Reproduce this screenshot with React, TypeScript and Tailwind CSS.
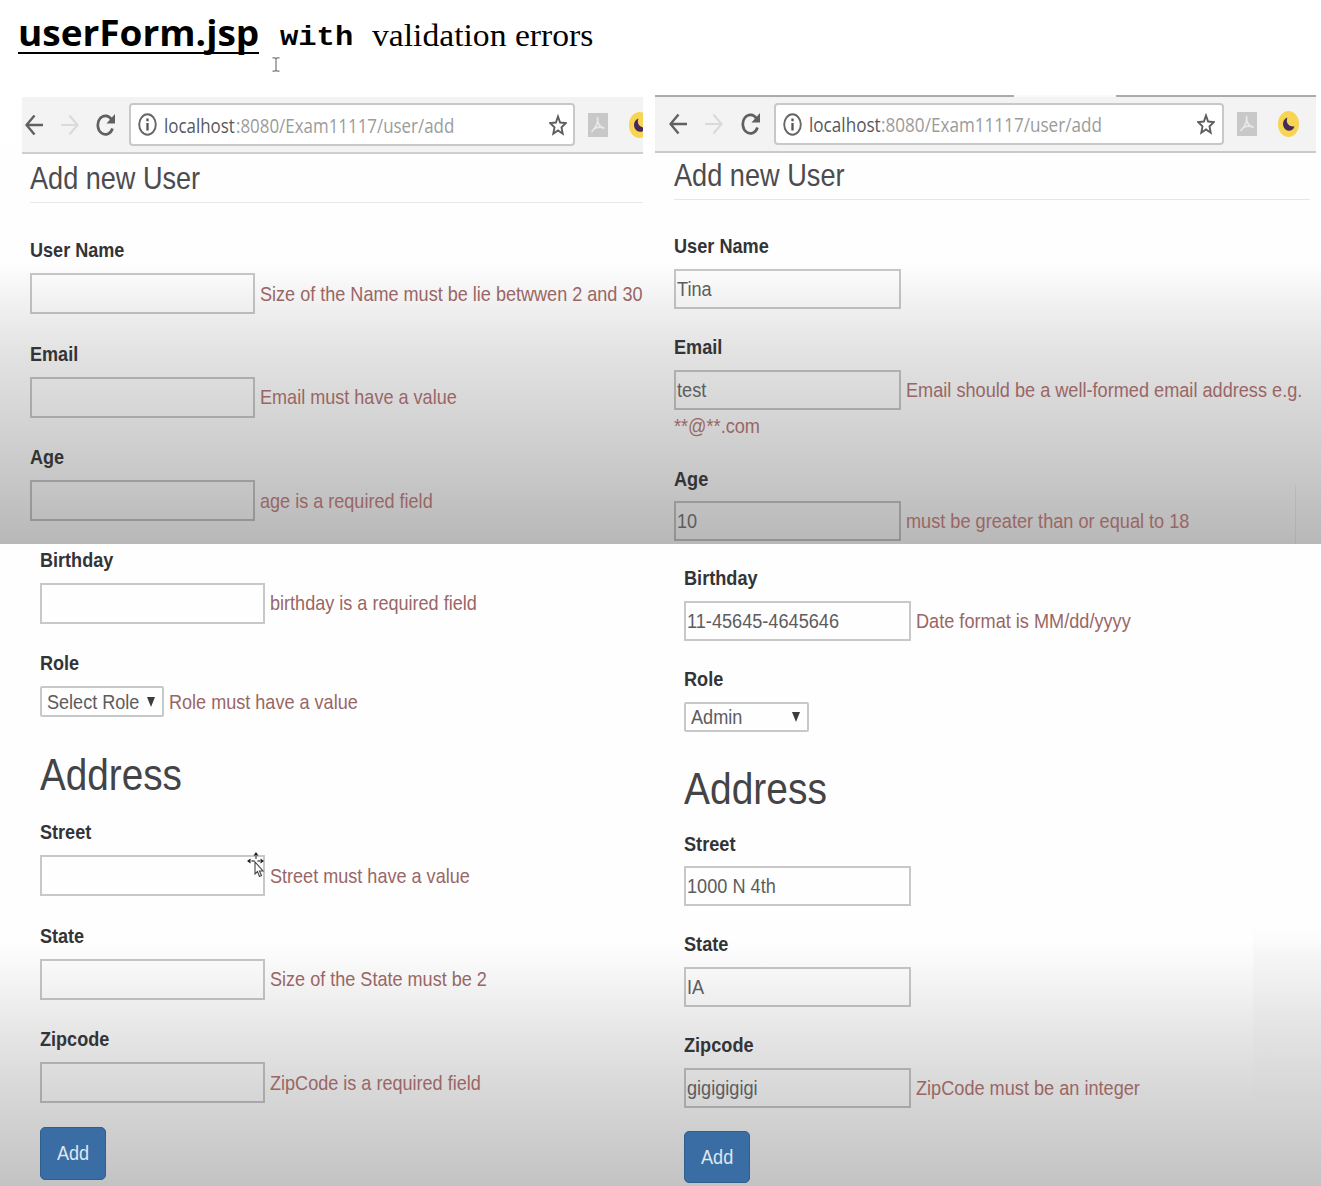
import type { ReactNode } from "react";

// Both browser captures are squeezed horizontally; each has its own metrics.
type Skin = {
  text: string;
  label: string;
  box: string;
  field: string;
  select: string;
  heading: string;
  address: string;
  button: string;
};

const LEFT: Skin = {
  text: "text-[21px] leading-6 scale-x-[0.86]",
  label: "mb-[11px]",
  box: "h-[41px] w-[225px]",
  field: "mb-[27.5px]",
  select: "h-[31px] w-[124px]",
  heading: "text-[31.5px] leading-9 scale-x-[0.86]",
  address: "text-[45px] leading-[50px] scale-x-[0.86]",
  button: "h-[53px] w-[66px] pl-4",
};

const RIGHT: Skin = {
  text: "text-[20.5px] leading-6 scale-x-[0.885]",
  label: "mb-[10.6px]",
  box: "h-[40px] w-[227px]",
  field: "mb-[26.3px]",
  select: "h-[30px] w-[125px]",
  heading: "text-[30.7px] leading-9 scale-x-[0.885]",
  address: "text-[44px] leading-[50px] scale-x-[0.885]",
  button: "h-[52px] w-[66px] pl-4",
};

function Txt({ c, children }: { c: string; children: ReactNode }) {
  return <span className={"block origin-left whitespace-nowrap " + c}>{children}</span>;
}

function Field({ s, label, value, error, more, last }: {
  s: Skin; label: string; value?: string; error?: string; more?: string; last?: boolean;
}) {
  return (
    <div className={last ? "" : s.field}>
      <Txt c={s.text + " font-bold text-[#333437] " + s.label}>{label}</Txt>
      <div className="flex items-center">
        <div className={"flex shrink-0 items-center border-2 border-black/21 pl-px " + s.box}>
          {value && <Txt c={s.text + " text-[#5c5c5e]"}>{value}</Txt>}
        </div>
        {error && <div className="ml-[4.5px] w-0"><Txt c={s.text + " text-[#996665]"}>{error}</Txt></div>}
      </div>
      {more && <div className="-mb-[1.4px] flex h-8 items-center"><Txt c={s.text + " text-[#996665]"}>{more}</Txt></div>}
    </div>
  );
}

function Select({ s, value, error }: { s: Skin; value: string; error?: string }) {
  return (
    <div>
      <Txt c={s.text + " font-bold text-[#333437] " + s.label}>Role</Txt>
      <div className="flex items-center">
        <div className={"flex shrink-0 items-center rounded-[2px] border-2 border-black/21 pr-[7px] pl-[5px] " + s.select}>
          <div className="min-w-0 flex-1"><Txt c={s.text + " text-[#5c5c5e]"}>{value}</Txt></div>
          <svg className="h-[10px] w-2" viewBox="0 0 8 10"><path d="M0 0h8L4 10z" fill="#3c3c3c" /></svg>
        </div>
        {error && <div className="ml-[4.5px] w-0"><Txt c={s.text + " text-[#996665]"}>{error}</Txt></div>}
      </div>
    </div>
  );
}

function AddButton({ s }: { s: Skin }) {
  return (
    <button className={"flex items-center rounded-[5px] border border-[#305f8e] bg-[#3a6da3] " + s.button}>
      <Txt c={s.text + " text-[#dfe6ee]"}>Add</Txt>
    </button>
  );
}

function Back() {
  return <svg className="h-[22px] w-[18px] shrink-0" viewBox="0 0 18 22" fill="none" stroke="#606060" strokeWidth="2.4"><path d="M18 11H2M9.5 1.5L1.5 11l8 9.5" /></svg>;
}
function Forward() {
  return <svg className="h-[22px] w-[18px] shrink-0" viewBox="0 0 18 22" fill="none" stroke="#dadada" strokeWidth="2.2"><path d="M0 11h16M8.5 1.5L16.5 11l-8 9.5" /></svg>;
}
function Reload() {
  return (
    <svg className="h-[22px] w-[19px] shrink-0" viewBox="0 0 19 22">
      <path d="M16.5 14.5A7.6 9.3 0 1 1 15.5 5.5" fill="none" stroke="#606060" strokeWidth="2.7" />
      <path d="M19 0v9.5h-8.5z" fill="#606060" />
    </svg>
  );
}
function Info() {
  return (
    <svg className="h-[23px] w-[19px] shrink-0" viewBox="0 0 19 23">
      <ellipse cx="9.5" cy="11.5" rx="8.3" ry="10.2" fill="none" stroke="#666" strokeWidth="1.9" />
      <path d="M9.5 5.5v2.7M9.5 10v7.5" stroke="#555" strokeWidth="2.3" />
    </svg>
  );
}
function Star() {
  return (
    <svg className="h-[22px] w-[18px] shrink-0" viewBox="0 0 18 22">
      <path d="M9 2.5l2.100 6 5.600.6-4.200 4.300 1.200 6.300L9 16.500l-4.700 3.200 1.200-6.300L1.300 9.100l5.600-.6z" fill="none" stroke="#5d5d5d" strokeWidth="1.9" />
    </svg>
  );
}
function Pdf() {
  return (
    <svg className="h-6 w-5 shrink-0" viewBox="0 0 20 24">
      <path d="M0 0h20v24H0z" fill="#c8c8c8" />
      <path d="M9.5 4c1 5-1 10-6 15M9.5 5c0 6 3 9.500 7 10.500M5.500 16c3-2 7-2.500 11-1" fill="none" stroke="#e8e8e8" strokeWidth="1.7" />
    </svg>
  );
}
function Moon() {
  return (
    <svg className="h-[26px] w-[21px] shrink-0" viewBox="0 0 21 26">
      <ellipse cx="10.5" cy="13" rx="10.5" ry="13" fill="#f7d553" />
      <path d="M9.5 6.5C7.500 11 10 16 16.500 15.500 15 20 10.500 21 7.500 18.500 3.500 15 4.500 8 9.500 6.500z" fill="#47295c" />
    </svg>
  );
}

function Url({ path }: { path: string }) {
  return (
    <div className="flex flex-1 font-['Open_Sans',sans-serif] text-[20.5px] leading-7">
      <div className="w-[72px]"><Txt c={"text-[#55585b] " + path}>localhost</Txt></div>
      <div className="w-0"><Txt c={"text-[#9b9b9b] " + path}>:8080/Exam11117/user/add</Txt></div>
    </div>
  );
}

export default function App() {
  return (
    <div className="h-[1186px] w-[1321px] overflow-hidden bg-white font-['Liberation_Sans',Arial,sans-serif]">
      <section className="h-[544px] overflow-hidden bg-[linear-gradient(to_bottom,#fff_0px,#fefefe_262px,#f3f3f3_296px,#e3e3e3_350px,#d2d2d2_430px,#b8b8b8_544px)]">
        <header className="relative flex h-[95px] items-start pl-[18px] text-black">
          <h1 className="mt-[13px] h-[41px] w-[241px] border-b-2 border-black">
            <Txt c="font-['Open_Sans',sans-serif] text-[36px] leading-10 font-bold scale-x-[1.027]">userForm.jsp</Txt>
          </h1>
          <div className="mt-[18px] ml-[21px] w-[92px]">
            <Txt c="font-['Liberation_Mono',monospace] text-[27px] leading-10 font-bold scale-x-[1.13]">with</Txt>
          </div>
          <div className="mt-4"><Txt c="font-['Liberation_Serif',serif] text-[31px] leading-10 scale-x-[1.085]">validation errors</Txt></div>
          <svg className="absolute top-[57px] left-[272px] h-[15px] w-2" viewBox="0 0 8 15" fill="none" stroke="#777" strokeWidth="1.2">
            <path d="M.5 .8h2.500L4 1.800 5 .8h2.500M4 1.500v12M.5 14.200h2.500l1-1 1 1h2.500" />
          </svg>
        </header>
        <div className="flex">
          <div className="w-[655px] shrink-0 pt-0.5 pl-[22px]">
            <div className="flex h-[57px] w-[621px] items-center overflow-hidden border-b-2 border-[#cfcfcf] bg-[#f3f3f3] pl-[3px]">
              <Back />
              <div className="ml-[18px] shrink-0"><Forward /></div>
              <div className="ml-[17px] shrink-0"><Reload /></div>
              <div className="ml-[14px] flex h-[43px] w-[446px] shrink-0 items-center rounded-[4px] border-2 border-[#c8c8c8] bg-white pr-[6px] pl-[7px]">
                <Info />
                <div className="ml-[7px] flex flex-1"><Url path="scale-x-[0.825]" /></div>
                <Star />
              </div>
              <div className="ml-[13px] shrink-0"><Pdf /></div>
              <div className="ml-[21px] shrink-0"><Moon /></div>
            </div>
            <div className="pl-2">
              <div className="mt-1.5 text-[#4c4c4f]"><Txt c={LEFT.heading}>Add new User</Txt></div>
              <div className="mt-1.5 mb-[35.4px] h-px w-[613px] bg-[#e8e8e8]" />
              <Field s={LEFT} label="User Name" error="Size of the Name must be lie betwwen 2 and 30" />
              <Field s={LEFT} label="Email" error="Email must have a value" />
              <Field s={LEFT} label="Age" error="age is a required field" />
            </div>
          </div>
          <div className="relative w-[666px] shrink-0">
            <div className="flex h-0.5 w-[661px] justify-between">
              <div className="w-[359px] bg-[#ababab]" />
              <div className="h-full flex-1 bg-[#fafafa]" />
              <div className="w-[200px] bg-[#ababab]" />
            </div>
            <div className="flex h-14 w-[661px] items-center border-b-2 border-[#cacaca] bg-[#f3f3f3] pl-[14px]">
              <Back />
              <div className="ml-[18px] shrink-0"><Forward /></div>
              <div className="ml-[18px] shrink-0"><Reload /></div>
              <div className="ml-[14px] flex h-[42px] w-[450px] shrink-0 items-center rounded-[4px] border-2 border-[#c8c8c8] bg-white pr-[7px] pl-[7px]">
                <Info />
                <div className="ml-[7px] flex flex-1"><Url path="scale-x-[0.835]" /></div>
                <Star />
              </div>
              <div className="ml-[13px] shrink-0"><Pdf /></div>
              <div className="ml-[21px] shrink-0"><Moon /></div>
            </div>
            <div className="pl-[19px]">
              <div className="mt-[5px] text-[#4c4c4f]"><Txt c={RIGHT.heading}>Add new User</Txt></div>
              <div className="mt-[5px] mb-[34.4px] h-px w-[636px] bg-[#e6e6e6]" />
              <Field s={RIGHT} label="User Name" value="Tina" />
              <Field s={RIGHT} label="Email" value="test" error="Email should be a well-formed email address e.g." more="**@**.com" />
              <Field s={RIGHT} label="Age" value="10" error="must be greater than or equal to 18" />
            </div>
            <div className="absolute top-[390px] left-[640px] h-[59px] w-px bg-black/6" />
          </div>
        </div>
      </section>
      <section className="relative flex h-[642px] bg-[linear-gradient(to_bottom,#fefefe_0px,#fefefe_396px,#f6f6f6_430px,#e8e8e8_480px,#d8d8d8_545px,#c3c3c3_642px)]">
        <div className="absolute right-0 bottom-0 h-[262px] w-[68px] bg-[linear-gradient(to_bottom,transparent_0px,rgba(0,0,0,0.02)_30px,rgba(0,0,0,0.015)_100px,transparent_190px)]" />
        <div className="relative w-[644px] shrink-0 pt-[3.6px] pl-10">
          <Field s={LEFT} label="Birthday" error="birthday is a required field" />
          <Select s={LEFT} value="Select Role" error="Role must have a value" />
          <div className="mt-[33px] mb-5 text-[#444447]"><Txt c={LEFT.address}>Address</Txt></div>
          <Field s={LEFT} label="Street" error="Street must have a value" />
          <Field s={LEFT} label="State" error="Size of the State must be 2" />
          <Field s={LEFT} label="Zipcode" error="ZipCode is a required field" last />
          <div className="mt-[23.5px]"><AddButton s={LEFT} /></div>
          <svg className="absolute top-[308px] left-[247px] h-[25px] w-[18px]" viewBox="0 0 18 25">
            <path d="M9 0l2.500 3.500h-5zM0 9l3.500-2.500v5zM17 9l-3.500-2.500v5z" fill="#222" />
            <path d="M9 4v3M4.500 9h3M10.500 9h2.500" stroke="#555" strokeWidth="1.3" />
            <path d="M8 10v12l2.500-2.500 2 5 2-1-2-4.500H16z" fill="#fff" stroke="#444" strokeWidth="1.1" />
          </svg>
        </div>
        <div className="relative pt-[22.1px] pl-10">
          <Field s={RIGHT} label="Birthday" value="11-45645-4645646" error="Date format is MM/dd/yyyy" />
          <Select s={RIGHT} value="Admin" />
          <div className="mt-8 mb-[18px] text-[#444447]"><Txt c={RIGHT.address}>Address</Txt></div>
          <Field s={RIGHT} label="Street" value="1000 N 4th" />
          <Field s={RIGHT} label="State" value="IA" />
          <Field s={RIGHT} label="Zipcode" value="gigigigigi" error="ZipCode must be an integer" last />
          <div className="mt-[23px]"><AddButton s={RIGHT} /></div>
        </div>
      </section>
    </div>
  );
}
